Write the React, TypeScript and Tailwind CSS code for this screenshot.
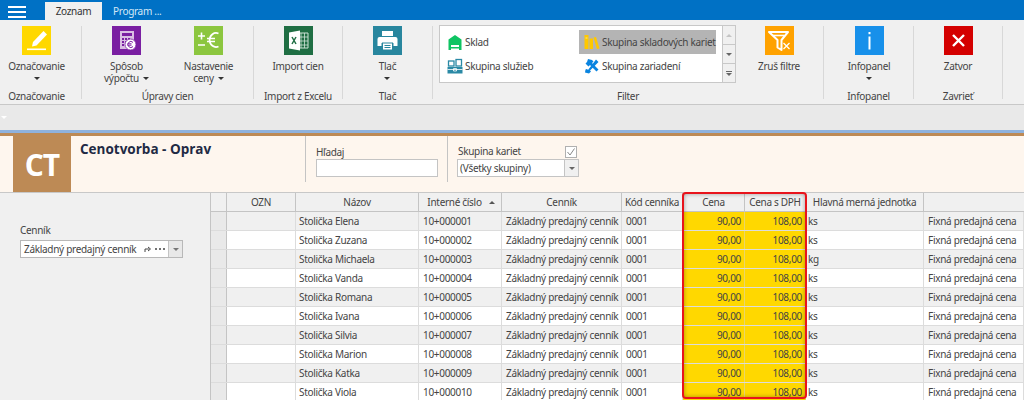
import React from "react";

function Caret() {
  return <span className="inline-block w-0 h-0 border-x-[3px] border-x-transparent border-t-[3px] border-t-[#333]" />;
}

function Tile({ bg, children }: { bg: string; children: React.ReactNode }) {
  return (
    <svg width="29" height="29" viewBox="0 0 29 29" className="block shrink-0">
      <rect width="29" height="29" fill={bg} />
      {children}
    </svg>
  );
}

const Pencil = () => (
  <Tile bg="#ffd800">
    <path d="M10 20.500l1-4.500L21.500 5l3.500 3.500L14.500 19.500z" fill="#fff" />
    <rect x="5" y="22.500" width="19" height="1.600" fill="#fff" />
  </Tile>
);
const Calc = () => (
  <Tile bg="#7a1fa2">
    <rect x="8" y="5" width="14" height="18" fill="#d9bfe3" />
    <rect x="10" y="7" width="10" height="3" fill="#7a1fa2" />
    <path d="M10 12h2v2h-2zM13 12h2v2h-2zM16 12h2v2h-2zM10 15h2v2h-2zM13 15h2v2h-2zM10 18h2v2h-2zM13 18h2v2h-2z" fill="#7a1fa2" />
    <circle cx="18.500" cy="18.500" r="5.500" fill="#fff" stroke="#7a1fa2" strokeWidth="0.800" />
    <path d="M21 16.400a3 3 0 1 0 0 4.200M15.500 17.800h4M15.500 19.200h4" stroke="#7a1fa2" strokeWidth="1" fill="none" />
  </Tile>
);
const PlusEuro = () => (
  <Tile bg="#8cc63f">
    <path d="M4 10h7M7.500 6.500v7M4 19h7" stroke="#fff" strokeWidth="1.600" fill="none" />
    <path d="M24.500 7.500a6.500 7 0 1 0 0 13M13 12.500h8M13 15.500h8" stroke="#fff" strokeWidth="1.700" fill="none" />
  </Tile>
);
const Excel = () => (
  <Tile bg="#1f6e43">
    <path d="M13 7h11v15H13z" fill="none" stroke="#cfe3d7" strokeWidth="1" />
    <path d="M17 7v15M20.500 7v15M13 11h11M13 15h11M13 19h11" stroke="#cfe3d7" strokeWidth="0.800" />
    <path d="M5 6.500l11-2v20l-11-2z" fill="#fff" />
    <path d="M8 11l4 7M12 11l-4 7" stroke="#1f6e43" strokeWidth="1.500" />
  </Tile>
);
const Printer = () => (
  <Tile bg="#28869e">
    <path d="M9 5h11v5H9z" fill="#fff" />
    <path d="M6.500 11h16a2 2 0 0 1 2 2v7h-4v-3H8.500v3h-4v-7a2 2 0 0 1 2-2z" fill="#fff" />
    <rect x="9.500" y="17" width="10" height="7" fill="#fff" stroke="#28869e" strokeWidth="1" />
    <path d="M11.500 19.500h6M11.500 21.500h6" stroke="#28869e" strokeWidth="1" />
  </Tile>
);
const FunnelX = () => (
  <Tile bg="#ffa200">
    <path d="M4 6h19l-6.500 8v10l-4-2.500V14z" fill="none" stroke="#fff" strokeWidth="2" strokeLinejoin="round" />
    <path d="M8 9.500h11" stroke="#fff" strokeWidth="1.600" />
    <path d="M18.500 17l6 6M24.500 17l-6 6" stroke="#fff" strokeWidth="1.300" />
  </Tile>
);
const Info = () => (
  <Tile bg="#1790ea">
    <rect x="13.500" y="6" width="2" height="2.200" fill="#fff" />
    <rect x="13.500" y="10.500" width="2" height="13" fill="#fff" />
  </Tile>
);
const Close = () => (
  <Tile bg="#d40000">
    <path d="M9 9l11 11M20 9L9 20" stroke="#fff" strokeWidth="2.400" />
  </Tile>
);

const House = () => (
  <svg width="16" height="17" viewBox="0 0 16 17" className="block">
    <path d="M8 1l6.500 4.500V16H12v-5H4v5H1.500V5.500z" fill="#0fc463" />
    <rect x="4" y="13" width="8" height="1.500" fill="#0fc463" />
  </svg>
);
const Boxes = () => (
  <svg width="16" height="16" viewBox="0 0 16 16" className="block">
    <rect x="1.500" y="3" width="5.500" height="5" fill="none" stroke="#2a89a5" strokeWidth="1.300" />
    <rect x="9" y="1.500" width="5.500" height="6.500" fill="none" stroke="#2a89a5" strokeWidth="1.300" />
    <rect x="0.500" y="9" width="15" height="6.500" fill="#2a89a5" />
    <path d="M0.500 11.500h15M6.500 10.500h3v2.500h-3z" stroke="#fff" strokeWidth="0.800" fill="none" />
  </svg>
);
const Books = () => (
  <svg width="16" height="16" viewBox="0 0 16 16" className="block">
    <rect x="0.500" y="1" width="4" height="14" fill="#ffc800" />
    <rect x="5.500" y="4.500" width="3.500" height="10.500" fill="#ffc800" />
    <path d="M9.500 3.500l2.500-.6L15.500 14.500l-2.600.6z" fill="#ffc800" />
    <rect x="1.500" y="3.500" width="2" height="1" fill="#ffe680" />
  </svg>
);
const Tools = () => (
  <svg width="16" height="16" viewBox="0 0 16 16" className="block">
    <path d="M4 1l4 1 1.500 1.500-1.500 1.500 6.500 6.500-2 2L6 7 4.500 8.500 1.500 5.500 3 4z" fill="#0a84e0" />
    <path d="M12 1.500l2.500 2.500-8.500 8.500 1 1L5 15.500l-4-1 .5-3L3 11 4 12z" fill="#0a84e0" />
  </svg>
);

function Bigbtn({ icon, lines, caret, w }: { icon: React.ReactNode; lines: string[]; caret?: "below" | "inline"; w: string }) {
  return (
    <div className={`flex flex-col items-center ${w}`}>
      {icon}
      <div className="mt-[4px] flex flex-col items-center leading-[12px] pt-[1px]">
        {lines.map((l, i) => (
          <div key={l} className="flex items-center gap-[4px] whitespace-nowrap">
            {l}
            {caret === "inline" && i === lines.length - 1 && <Caret />}
          </div>
        ))}
        {caret === "below" && (
          <div className="h-[12px] flex items-center">
            <Caret />
          </div>
        )}
      </div>
    </div>
  );
}

function Group({ w, label, children, labelClass }: { w: string; label: string; children: React.ReactNode; labelClass?: string }) {
  return (
    <div className={`relative ${w} shrink-0 h-[73px] mt-[6px] border-r border-[#d8d8d8] flex flex-col`}>
      <div className="flex-1 flex justify-center">{children}</div>
      <div className={`text-center leading-[12px] h-[11px] translate-y-[2px] whitespace-nowrap ${labelClass ?? ""}`}>{label}</div>
    </div>
  );
}

function FilterItem({ icon, label, active, w }: { icon: React.ReactNode; label: string; active?: boolean; w: string }) {
  return (
    <div className={`flex items-center gap-[2px] h-[24px] pl-[2px] ${w} ${active ? "bg-[#b4b4b4]" : ""}`}>
      <span className="w-[16px] ml-[3px]">{icon}</span>
      <span className="whitespace-nowrap">{label}</span>
    </div>
  );
}

function HCell({ w, children, right }: { w: string; children?: React.ReactNode; right?: React.ReactNode }) {
  return (
    <div className={`${w} shrink-0 relative h-full flex items-center justify-center border-r border-[#c4c4c4] whitespace-nowrap`}>
      {children}
      {right}
    </div>
  );
}

const names = ["Elena", "Zuzana", "Michaela", "Vanda", "Romana", "Ivana", "Silvia", "Marion", "Katka", "Viola"];

const widths = {
  sel: "w-[16px]",
  ozn: "w-[69px]",
  naz: "w-[123px]",
  int: "w-[83px]",
  cen: "w-[120px]",
  kod: "w-[61px]",
  c1: "w-[62px]",
  c2: "w-[61px]",
  hm: "w-[118px]",
};

function Row({ name, i }: { name: string; i: number }) {
  const odd = i % 2 === 0;
  const bg = odd ? "bg-[#f0f0f0]" : "bg-white";
  const c = `h-full flex items-center border-r border-[#dcdcdc] whitespace-nowrap overflow-hidden`;
  const y = `h-full flex items-center justify-end pr-[3px] border-r border-[#e8d66a] bg-[#ffd800] shrink-0`;
  return (
    <div className={`flex h-[19px] shrink-0 border-b border-[#dcdcdc] ${bg}`}>
      <div className={`${widths.sel} shrink-0 bg-[#e9e9e9] border-r border-[#c4c4c4]`} />
      <div className={`${widths.ozn} shrink-0 ${c}`} />
      <div className={`${widths.naz} shrink-0 ${c} pl-[3px]`}>Stolička {name}</div>
      <div className={`${widths.int} shrink-0 ${c} pl-[4px]`}>10+{String(i + 1).padStart(6, "0")}</div>
      <div className={`${widths.cen} shrink-0 ${c} pl-[4px]`}>Základný predajný cenník</div>
      <div className={`${widths.kod} shrink-0 ${c} pl-[4px]`}>0001</div>
      <div className={`${widths.c1} ${y}`}>90,00</div>
      <div className={`${widths.c2} ${y}`}>108,00</div>
      <div className={`${widths.hm} shrink-0 ${c} pl-[2px]`}>{i === 2 ? "kg" : "ks"}</div>
      <div className={`flex-1 ${c} pl-[4px]`}>Fixná predajná cena</div>
    </div>
  );
}

export default function App() {
  return (
    <div className="relative w-[1024px] h-[400px] overflow-hidden bg-[#f0f0f0] text-[10px] tracking-[-0.3px] text-[#444] flex flex-col font-['Noto_Sans',sans-serif]">
      {/* Title bar */}
      <div className="h-[20px] shrink-0 bg-[#0071c5] flex items-end">
        <div className="w-[45px] h-full flex flex-col justify-center gap-[3px] pt-[4px] pl-[8px] pr-[19px]">
          <div className="h-[2px] bg-white" />
          <div className="h-[2px] bg-white" />
          <div className="h-[2px] bg-white" />
        </div>
        <div className="w-[57px] h-[18px] bg-[#f0f0f0] flex items-center justify-center text-[#333]">Zoznam</div>
        <div className="pl-[11px] h-[18px] flex items-center text-[#d5e8f7]">Program ...</div>
      </div>

      {/* Ribbon */}
      <div className="h-[85px] shrink-0 flex border-b border-[#c8c8c8] bg-[#f0f0f0]">
        <Group w="w-[82px]" label="Označovanie" labelClass="pr-[8px]">
          <div className="pr-[8px]">
            <Bigbtn w="w-[74px]" icon={<Pencil />} lines={["Označovanie"]} caret="below" />
          </div>
        </Group>
        <Group w="w-[172px]" label="Úpravy cien">
          <div className="flex w-full pl-[2px]">
            <Bigbtn w="w-[85px]" icon={<Calc />} lines={["Spôsob", "výpočtu"]} caret="inline" />
            <Bigbtn w="w-[79px]" icon={<PlusEuro />} lines={["Nastavenie", "ceny"]} caret="inline" />
          </div>
        </Group>
        <Group w="w-[89px]" label="Import z Excelu">
          <Bigbtn w="w-[80px]" icon={<Excel />} lines={["Import cien"]} />
        </Group>
        <Group w="w-[90px]" label="Tlač">
          <Bigbtn w="w-[80px]" icon={<Printer />} lines={["Tlač"]} caret="below" />
        </Group>
        <Group w="w-[391px]" label="Filter">
          <div className="flex w-full">
            <div className="ml-[6px] -mt-[1px] w-[297px] h-[58px] border border-[#c8c8c8] bg-white flex shrink-0">
              <div className="flex-1 py-[4px] pl-[2px] flex flex-wrap content-start">
                <FilterItem w="w-[137px]" icon={<House />} label="Sklad" />
                <FilterItem w="w-[137px]" active icon={<Books />} label="Skupina skladových kariet" />
                <FilterItem w="w-[137px]" icon={<Boxes />} label="Skupina služieb" />
                <FilterItem w="w-[137px]" icon={<Tools />} label="Skupina zariadení" />
              </div>
              <div className="w-[13px] border-l border-[#c8c8c8] bg-[#f0f0f0] flex flex-col text-[#666]">
                <div className="flex-1 flex items-center justify-center border-b border-[#c8c8c8]">
                  <span className="w-0 h-0 border-x-[3px] border-x-transparent border-b-[3px] border-b-[#c4c4c4]" />
                </div>
                <div className="flex-1 flex items-center justify-center border-b border-[#c8c8c8]">
                  <span className="w-0 h-0 border-x-[3px] border-x-transparent border-t-[3px] border-t-[#666]" />
                </div>
                <div className="flex-1 flex flex-col gap-[1px] items-center justify-center">
                  <span className="w-[6px] h-[1px] bg-[#666]" />
                  <span className="w-0 h-0 border-x-[3px] border-x-transparent border-t-[3px] border-t-[#666]" />
                </div>
              </div>
            </div>
            <div className="ml-[23px]">
              <Bigbtn w="w-[40px]" icon={<FunnelX />} lines={["Zruš filtre"]} />
            </div>
          </div>
        </Group>
        <Group w="w-[90px]" label="Infopanel">
          <div className="pl-[1px]">
            <Bigbtn w="w-[80px]" icon={<Info />} lines={["Infopanel"]} caret="below" />
          </div>
        </Group>
        <Group w="w-[89px]" label="Zavrieť">
          <Bigbtn w="w-[80px]" icon={<Close />} lines={["Zatvor"]} />
        </Group>
      </div>

      {/* Toolbar strip */}
      <div className="h-[25px] shrink-0 bg-[#e9e9e9] flex items-center pl-[1px]">
        <span className="w-0 h-0 border-x-[3px] border-x-transparent border-t-[3px] border-t-white" />
      </div>
      <div className="h-[3px] shrink-0 bg-[#8fb2dd]" />
      <div className="h-[3px] shrink-0 bg-[#bd8a55]" />

      {/* Header */}
      <div className="h-[57px] shrink-0 bg-[#fef6ee] flex border-b border-[#c8c8c8]">
        <div className="w-[13px]" />
        <div className="w-[58px] bg-[#bd8a55] flex items-center justify-center text-white text-[30px] tracking-[-1px] font-bold font-['Open_Sans',sans-serif]">CT</div>
        <div className="w-[234px] pl-[9px] pt-[4px] text-[13.5px] tracking-[0px] font-bold text-[#1f2a44] font-['Open_Sans',sans-serif] leading-[18px] whitespace-nowrap">Cenotvorba - Oprav</div>
        <div className="w-[143px] h-[46px] border-l border-r border-[#c4c4c4] pl-[10px] flex flex-col">
          <div className="leading-[12px] pt-[9px] pb-[1px] h-[23px] flex items-center">Hľadaj</div>
          <div className="w-[122px] h-[18px] bg-white border border-[#c4c4c4]" />
        </div>
        <div className="pl-[9px] flex flex-col">
          <div className="h-[23px] w-[120px] flex items-center justify-between pt-[9px] pb-[1px] pl-[1px]">
            <span>Skupina kariet</span>
            <svg width="12" height="12" viewBox="0 0 12 12" className="block">
              <rect x="0.500" y="0.500" width="11" height="11" fill="#fff" stroke="#b0b0b0" />
              <path d="M2.500 6l2.500 3 4.500-6.500" stroke="#888" strokeWidth="1" fill="none" />
            </svg>
          </div>
          <div className="w-[122px] h-[18px] bg-white border border-[#c4c4c4] flex items-center pl-[2px]">
            <span className="flex-1">(Všetky skupiny)</span>
            <span className="w-[14px] h-full border-l border-[#c4c4c4] bg-[#f0f0f0] flex items-center justify-center">
              <span className="w-0 h-0 border-x-[3px] border-x-transparent border-t-[3px] border-t-[#666]" />
            </span>
          </div>
        </div>
      </div>

      {/* Body */}
      <div className="flex-1 flex min-h-0">
        <div className="w-[211px] shrink-0 bg-[#f0f0f0] border-r border-[#c4c4c4] pl-[20px] pt-[30px]">
          <div className="leading-[14px] mb-[3px]">Cenník</div>
          <div className="w-[163px] h-[18px] bg-white border border-[#b8b8b8] flex items-center pl-[3px]">
            <span className="flex-1 whitespace-nowrap">Základný predajný cenník</span>
            <svg width="24" height="10" viewBox="0 0 24 10" className="block">
              <path d="M1 8V5h4M4 3l2.500 2L4 7" stroke="#444" strokeWidth="1" fill="none" />
              <path d="M11 5h2M15 5h2M19 5h2" stroke="#444" strokeWidth="1.300" />
            </svg>
            <span className="w-[14px] h-full border-l border-[#c4c4c4] bg-[#e8e8e8] flex items-center justify-center">
              <span className="w-0 h-0 border-x-[3px] border-x-transparent border-t-[3px] border-t-[#777]" />
            </span>
          </div>
        </div>
        <div className="flex-1 flex flex-col min-w-0">
          <div className="flex h-[19px] shrink-0 bg-[#f0f0f0] border-b border-[#c4c4c4]">
            <HCell w={widths.sel} />
            <HCell w={widths.ozn}>OZN</HCell>
            <HCell w={widths.naz}>Názov</HCell>
            <HCell w={widths.int}>
              <span className="pr-[11px]">Interné číslo</span>
              <span className="absolute right-[6px] top-[8px] w-0 h-0 border-x-[3px] border-x-transparent border-b-[3px] border-b-[#555]" />
            </HCell>
            <HCell w={widths.cen}>Cenník</HCell>
            <HCell w={widths.kod}>Kód cenníka</HCell>
            <HCell w={widths.c1}>Cena</HCell>
            <HCell w={widths.c2}>Cena s DPH</HCell>
            <HCell w={widths.hm}>Hlavná merná jednotka</HCell>
            <div className="flex-1" />
          </div>
          {names.map((n, i) => (
            <Row key={n} name={n} i={i} />
          ))}
        </div>
      </div>

      {/* Red annotation */}
      <div className="absolute left-[682px] top-[192px] w-[125px] h-[207px] border-2 border-[#e8141c] rounded-[4px] shadow-[inset_0_0_4px_rgba(0,0,0,0.35)] pointer-events-none" />
    </div>
  );
}
